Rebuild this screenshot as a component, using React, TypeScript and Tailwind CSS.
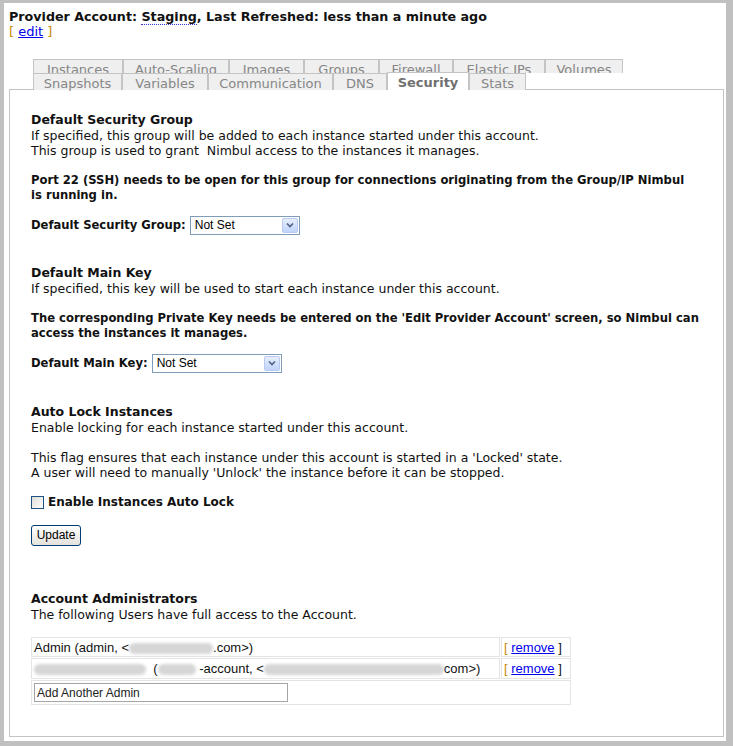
import React from "react";

const rowOne: [string, string][] = [
  ["Instances", "w-[90px]"],
  ["Auto-Scaling", "w-[106px]"],
  ["Images", "w-[75px]"],
  ["Groups", "w-[75px]"],
  ["Firewall", "w-[74px]"],
  ["Elastic IPs", "w-[92px]"],
  ["Volumes", "w-[78px]"],
];
const rowTwo: [string, string][] = [
  ["Snapshots", "w-[89px]"],
  ["Variables", "w-[86px]"],
  ["Communication", "w-[125px]"],
  ["DNS", "w-[54px]"],
  ["Security", "w-[82px]"],
  ["Stats", "w-[57px]"],
];

// Windows XP style select box
const FakeSelect = ({ width }: { width: string }) => (
  <div className={`inline-flex items-center h-[19px] border border-[#7f9db9] bg-white ${width}`}>
    <span className="flex-1 pl-[4px] text-[12px] leading-[15px] text-black font-['Liberation_Sans',Arial,sans-serif]">
      Not Set
    </span>
    <span className="mr-px flex items-center justify-center w-[16px] h-[15px] border border-[#b9c9ef] rounded-[2px] bg-gradient-to-b from-[#e6eefc] to-[#c1d3fb]">
      <svg width="8" height="6" viewBox="0 0 8 6">
        <path d="M1 1.5 L4 4.5 L7 1.5" fill="none" stroke="#4d6185" strokeWidth="1.6" />
      </svg>
    </span>
  </div>
);

const Blur = ({ w }: { w: string }) => (
  <span className={`inline-block align-middle h-[11px] rounded-full bg-[#d6d6d6] blur-[1.5px] ${w}`} />
);

const Tab = ({ label, width, active }: { label: string; width: string; active?: boolean }) => (
  <div
    className={`shrink-0 text-center pt-[2px] border border-b-0 border-[#c4c4c4] leading-[15px] text-[13px] ${width} ${
      active ? "bg-white text-[#707070] font-bold h-[18px]" : "bg-[#efefef] text-[#868686] h-[17px]"
    }`}
  >
    {label}
  </div>
);

export default function App() {
  return (
    <div className="min-h-screen bg-[#c0c0c0] pt-[3px] pl-[4px] pr-[7px] pb-[6px] font-['DejaVu_Sans',Verdana,sans-serif] text-[12.5px] leading-[15px] text-[#111]">
      <div className="bg-white pl-[5px] pr-[2px] pt-[6px] pb-[4px]">
        <div className="font-bold text-[12.7px]">
          Provider Account:{" "}
          <span className="border-b border-dotted border-[#3333cc]">Staging</span>, Last Refreshed: less than a minute ago
        </div>
        <div className="text-[13px]">
          <span className="text-[#c88a00]">[</span>{" "}
          <a href="#" className="text-[#0000ee] underline">edit</a>{" "}
          <span className="text-[#c88a00]">]</span>
        </div>

        {/* tabs */}
        <div className="mt-[20px] ml-[24px]">
          <div className="flex h-[14px] overflow-hidden">
            {rowOne.map(([t, w]) => (
              <Tab key={t} label={t} width={w} />
            ))}
          </div>
          <div className="flex items-end h-[17px]">
            {rowTwo.map(([t, w]) => (
              <Tab key={t} label={t} width={w} active={t === "Security"} />
            ))}
          </div>
        </div>

        <div className="border border-[#c4c4c4] -mt-px pl-[21px] pr-[10px] pt-[22px] pb-[30px]">
          {/* security group */}
          <div className="font-bold mb-px">Default Security Group</div>
          <p>
            If specified, this group will be added to each instance started under this account.
            <br />
            This group is used to grant &nbsp;Nimbul access to the instances it manages.
          </p>
          <p className="mt-[15px] font-bold text-[11.6px]">
            Port 22 (SSH) needs to be open for this group for connections originating from the Group/IP Nimbul
            <br />
            is running in.
          </p>
          <div className="mt-[12px] flex items-center gap-[4px] h-[20px]">
            <span className="font-bold text-[11.6px]">Default Security Group:</span>
            <FakeSelect width="w-[110px]" />
          </div>

          {/* main key */}
          <div className="mt-[30px] font-bold mb-px">Default Main Key</div>
          <p>If specified, this key will be used to start each instance under this account.</p>
          <p className="mt-[15px] font-bold text-[11.6px]">
            The corresponding Private Key needs be entered on the 'Edit Provider Account' screen, so Nimbul can
            <br />
            access the instances it manages.
          </p>
          <div className="mt-[12px] flex items-center gap-[4px] h-[20px]">
            <span className="font-bold text-[11.6px]">Default Main Key:</span>
            <FakeSelect width="w-[130px]" />
          </div>

          {/* auto lock */}
          <div className="mt-[31px] font-bold mb-px">Auto Lock Instances</div>
          <p>Enable locking for each instance started under this account.</p>
          <p className="mt-[15px]">
            This flag ensures that each instance under this account is started in a 'Locked' state.
            <br />
            A user will need to manually 'Unlock' the instance before it can be stopped.
          </p>
          <label className="mt-[14px] flex items-center gap-[4px] h-[16px]">
            <span className="w-[13px] h-[13px] border border-[#1c5180] bg-gradient-to-br from-[#dcdcd7] to-white" />
            <span className="font-bold text-[12px]">Enable Instances Auto Lock</span>
          </label>
          <button className="mt-[15px] block w-[50px] h-[21px] rounded-[3px] border border-[#003c74] bg-gradient-to-b from-white to-[#e3e2dc] text-[12px] leading-[15px] text-black font-['Liberation_Sans',Arial,sans-serif]">
            Update
          </button>

          {/* administrators */}
          <div className="mt-[45px] font-bold mb-px">Account Administrators</div>
          <p>The following Users have full access to the Account.</p>
          <table className="mt-[14px] -ml-px border-separate border-spacing-[1px] font-['Liberation_Sans',Arial,sans-serif] text-[13px] leading-[15px] text-[#111]">
            <tbody>
              <tr>
                <td className="w-[469px] h-[20px] border border-[#e4e4e4] px-[2px] whitespace-nowrap">
                  Admin (admin, &lt;<Blur w="w-[84px]" />.com&gt;)
                </td>
                <td className="w-[70px] border border-[#e4e4e4] px-[2px] whitespace-nowrap">
                  <span className="text-[#c88a00]">[</span>{" "}
                  <a href="#" className="text-[#0000ee] underline">remove</a> ]
                </td>
              </tr>
              <tr>
                <td className="h-[21px] border border-[#e4e4e4] px-[2px] whitespace-nowrap">
                  <Blur w="w-[112px]" /> &nbsp;(<Blur w="w-[38px]" /> -account, &lt;<Blur w="w-[180px]" />com&gt;)
                </td>
                <td className="border border-[#e4e4e4] px-[2px] whitespace-nowrap">
                  <span className="text-[#c88a00]">[</span>{" "}
                  <a href="#" className="text-[#0000ee] underline">remove</a> ]
                </td>
              </tr>
              <tr>
                <td colSpan={2} className="h-[25px] border border-[#e4e4e4] px-[2px]">
                  <input
                    defaultValue="Add Another Admin"
                    className="block w-[254px] h-[19px] border border-[#a5a5a5] px-[2px] text-[12px] text-[#222] font-['Liberation_Sans',Arial,sans-serif] outline-none"
                  />
                </td>
              </tr>
            </tbody>
          </table>
        </div>
      </div>
    </div>
  );
}
